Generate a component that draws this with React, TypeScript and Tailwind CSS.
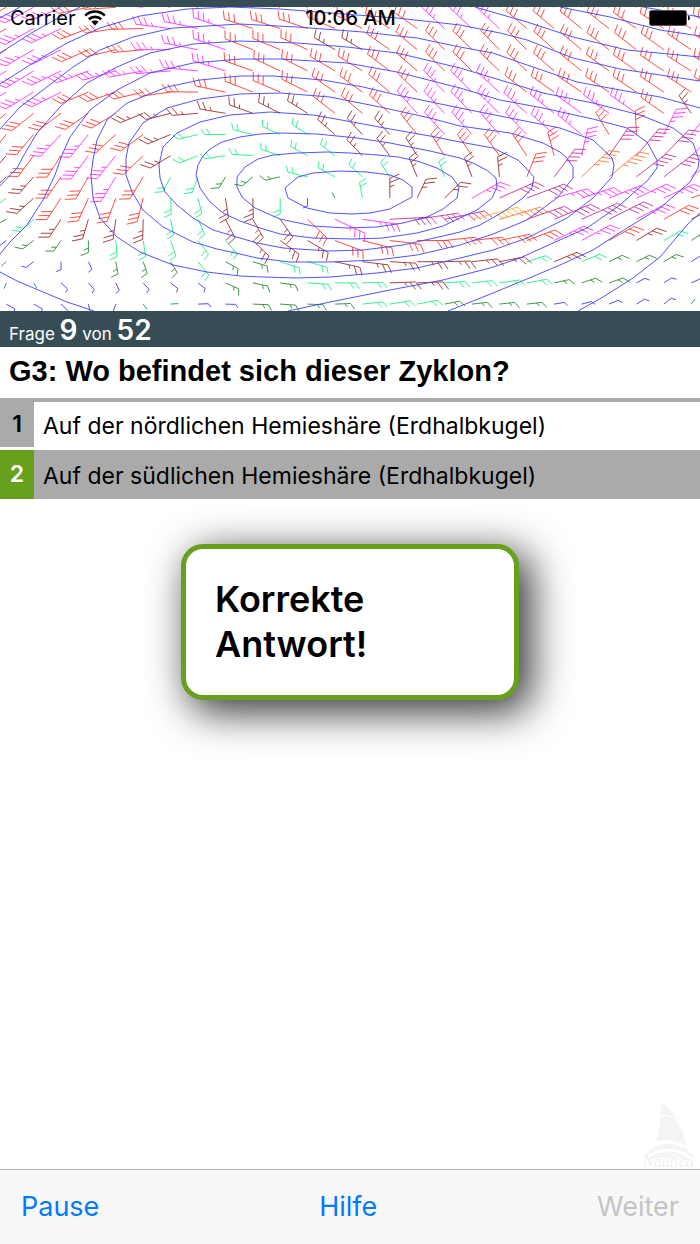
import React from 'react'

const barbColors: Record<string, string> = {
  t: '#1a8f8f',
  b: '#3c3cff',
  d: '#2e8b2e',
  g: '#22ee88',
  n: '#9c3030',
  r: '#ff3b30',
  m: '#ff33ff',
  p: '#c8329b',
  o: '#ff7733',
  y: '#ffb52e',
}

// shaft length, full feathers, half feathers
const barbShapes: Record<string, [number, number, number]> = {
  t: [6, 0, 0],
  b: [8, 0, 1],
  d: [12, 1, 1],
  g: [16, 2, 0],
  n: [20, 2, 1],
  r: [24, 3, 0],
  m: [27, 3, 1],
  p: [32, 4, 0],
  o: [34, 4, 1],
  y: [37, 5, 0],
}

// one entry per grid point: speed class and direction in degrees
const windRows = [
  'r215 m215 m210 r195 r185 m172 m165 m158 r155 r155 r155 r152 r150 r145 r142 r138 m130 m130 m130 r132 r133 r134 r135 r138 r140 r142 r145',
  'r218 m216 m212 r206 r191 r182 m171 m165 m156 r157 r158 r157 r152 r147 r142 r138 m130 m130 m130 r132 r133 r134 r135 r138 r140 r142 r145',
  'm218 m217 m213 r210 r197 r187 m180 m166 m156 r153 r152 r150 n143 n143 r138 r133 r128 r128 r127 r128 r131 r133 r135 r135 r137 r139 r141',
  'm219 m218 m212 m206 m200 m193 m186 m173 m158 r155 r149 r147 r143 r142 r136 r132 r128 r128 r129 r130 r132 r134 r137 r138 r139 r141 r143',
  'm219 m218 m213 r208 r203 r197 r190 r179 r165 r153 r151 r147 r138 r137 r133 r129 m127 m128 m131 r135 r138 r139 r139 r139 r139 r140 r141',
  'r228 r226 r224 r222 r218 n208 n198 n186 n168 n155 n147 n141 r135 r133 r131 m125 m126 m127 m129 m131 m134 m137 m137 m138 r138 n118 m75',
  'r238 r237 m234 m238 r230 r223 n208 g197 g180 g162 g150 g140 n132 n126 n126 r122 m125 m125 m124 m127 m131 m133 r115 r92 m69 m58 m50',
  'n236 r240 r243 m240 m238 r231 n218 g207 g191 g175 g157 g145 g135 n127 n120 n116 r116 r118 r119 r117 r102 m80 p62 p57 p53 m50 m48',
  'n230 n236 r242 r246 m245 r245 g248 g254 d246 d228 d196 g163 g145 g131 g117 n108 g106 n107 n94 r73 p60 o51 o47 p45 p45 m45 m45',
  'g225 n230 r243 r251 r254 r259 g272 g281 n277 n271 g270 b270 t112 g98 n90 n70 n52 m36 p30 p26 m20 m23 m27 m31 m31 r25 r25',
  'd215 g230 n243 n257 n264 n269 g279 g289 n292 n294 n299 r309 m329 m350 p4 p11 p15 y19 o21 p24 p28 p30 p33 m34 r36 n33 n33',
  'b225 d225 d242 d270 g274 g277 g285 g301 g305 n309 n317 n323 r334 r342 r351 r0 r8 r8 r15 r26 m32 m35 r36 n38 g37 d40 d40',
  't230 b225 b270 b290 d278 d285 d295 g302 d325 d338 g338 g340 n344 n351 n356 n0 n2 n8 n14 g22 n28 g28 d32 d33 d37 b40 b40',
  't255 t295 b310 b305 b290 b305 b315 b315 d330 d345 d350 g355 g0 g2 n3 n3 g5 g8 g10 g13 d16 d23 d24 b35 b40 b30 b30',
  'b325 b325 b310 b280 b255 t300 t5 b3 b358 d357 d355 d357 d3 g8 g12 g14 d14 d8 d8 d8 b12 b18 b28 b38 b45 t60 t60',
]

const isobars = [
  '285,188 298,177 313,173 340,171 367,172 390,175 403,180 412,187 412,197 390,209 370,213 352,214 330,213 307,208 288,198 285,188',
  '237,187 237,177 245,167 258,159 273,155 297,153 327,152 350,153 377,155 398,157 417,161 437,168 452,177 459,187 457,198 443,209 427,217 403,223 377,227 347,228 313,226 280,219 255,208 242,197 237,187',
  '196,175 198,165 203,156 210,149 222,142 240,137 260,134 280,133 317,134 357,138 390,143 430,151 460,158 475,164 488,171 496,178 497,187 492,198 477,210 460,218 443,226 417,233 383,238 353,239 313,238 280,234 257,227 240,221 223,213 210,202 200,188 196,175',
  '159,165 160,178 165,192 177,205 193,218 213,230 240,238 257,243 283,248 330,251 363,250 403,245 443,236 460,232 480,225 503,212 523,198 532,188 534,177 525,167 518,160 493,148 460,142 430,136 390,129 347,121 313,115 270,112 230,115 200,122 177,133 163,147 159,165',
  '126,158 126,175 132,192 143,210 163,227 193,242 217,249 240,254 257,258 290,262 330,262 377,260 417,255 460,245 493,234 527,220 557,198 573,178 573,167 567,158 560,152 543,143 510,133 460,126 430,118 380,107 330,97 280,93 240,94 200,99 167,108 143,123 129,143 126,158',
  '93,160 91,175 93,198 100,218 117,237 140,252 173,265 207,272 240,276 263,277 297,278 330,277 377,273 417,268 460,258 493,250 527,238 567,218 593,198 612,177 614,165 612,158 593,140 560,128 510,118 460,108 397,95 363,87 323,80 273,76 240,76 200,80 167,87 127,103 107,120 97,140 93,160',
  '0,254 10,242 27,225 43,200 55,175 62,155 70,137 90,110 117,90 150,73 193,63 240,59 280,59 347,63 397,72 460,88 500,100 543,108 593,119 627,128 647,142 657,160 657,168 648,180 620,205 587,228 553,243 520,258 490,268 443,280 390,290 330,302 288,311',
  '0,186 17,168 24,155 37,133 60,107 87,83 117,67 150,53 193,44 240,41 297,43 347,47 397,53 460,68 500,80 543,93 593,103 640,115 673,128 693,143 699,160 698,168 690,182 660,208 627,228 593,250 560,265 527,279 493,293 448,311',
  '0,129 20,107 43,90 73,67 100,50 133,37 173,28 240,24 297,27 363,32 417,38 460,47 493,53 527,65 577,82 620,90 660,97 700,108',
  '0,84 33,63 67,43 100,28 140,16 187,9 230,7 280,9 330,13 397,18 460,25 500,33 527,40 573,58 620,69 700,81',
  '0,53 33,32 60,17 80,7',
  '0,18 20,7',
  '475,7 527,22 573,37 627,50 700,57',
  '560,7 610,17 660,30 700,36',
  '643,7 700,17',
  '0,272 17,281 43,292 67,302 94,311',
  '578,311 603,297 633,278 660,257 687,225 700,213',
]

// the chart is wider than it is tall, so x is stretched
const STRETCH = 1.29

function barbPath(x: number, y: number, deg: number, kind: string) {
  const [length, full, half] = barbShapes[kind]
  const a = (deg * Math.PI) / 180
  const f = ((deg - 62) * Math.PI) / 180
  const at = (d: number) => [x + Math.cos(a) * d * STRETCH, y - Math.sin(a) * d]
  const [tx, ty] = at(length)
  let path = `M${x} ${y}L${tx.toFixed(1)} ${ty.toFixed(1)}`
  for (let i = 0; i < full + half; i++) {
    const size = i < full ? (length > 16 ? 8.5 : 6.5) : 4
    const [fx, fy] = at(length - i * 4.4)
    path += `M${fx.toFixed(1)} ${fy.toFixed(1)}l${(Math.cos(f) * size * STRETCH).toFixed(1)} ${(-Math.sin(f) * size).toFixed(1)}`
  }
  return path
}

function WeatherMap() {
  return (
    <svg viewBox="0 7 700 304" className="block w-full bg-white" role="img">
      <g fill="none" strokeWidth="0.9">
        {windRows.map((row, j) =>
          row.split(' ').map((cell, i) => (
            <path
              key={`${j}-${i}`}
              d={barbPath(6.2 + i * 27.4, 7.3 + j * 21.2, Number(cell.slice(1)), cell[0])}
              stroke={barbColors[cell[0]]}
            />
          ))
        )}
      </g>
      <g fill="none" stroke="#4040ff" strokeWidth="0.9" strokeLinejoin="round">
        {isobars.map((points) => (
          <polyline key={points} points={points} />
        ))}
      </g>
    </svg>
  )
}

function StatusBar() {
  return (
    <div className="absolute inset-x-0 top-0 z-10 grid h-9 grid-cols-3 items-center pr-[9px] pl-[10px] text-[20px] text-black">
      <div className="flex items-center gap-2">
        <span>Carrier</span>
        <svg viewBox="0 0 22 16" className="h-4 w-[22px]">
          <g fill="none" stroke="#000" strokeWidth="2.6">
            <path d="M1.2 5.6C6.8 0.2 15.2 0.2 20.8 5.6" />
            <path d="M4.8 9.3C8.4 6 13.6 6 17.2 9.3" />
          </g>
          <path d="M11 15.4L7.4 11.8C9.4 9.9 12.6 9.9 14.6 11.8Z" />
        </svg>
      </div>
      <span className="text-center font-medium">10:06 AM</span>
      <svg viewBox="0 0 42 16" className="h-4 w-[42px] justify-self-end">
        <rect x="0.5" y="0.5" width="37" height="15" rx="2" fill="#000" stroke="#555" />
        <path d="M39 5.5C41.6 6 41.6 10 39 10.5Z" />
      </svg>
    </div>
  )
}

function Answer({ number, text, selected }: { number: number; text: string; selected?: boolean }) {
  return (
    <button type="button" className={`flex w-full items-stretch text-left ${selected ? 'h-[49px] bg-[#aaaaaa]' : 'h-[45px] bg-white'}`}>
      <span className={`flex w-[34px] items-center justify-center text-[23px] font-semibold ${selected ? 'bg-[#66a01c] text-white' : 'bg-[#aaaaaa] text-black'}`}>
        {number}
      </span>
      <span className="flex items-center pt-[3px] pl-[9px] text-[23px] text-black">{text}</span>
    </button>
  )
}

function BoatMark() {
  return (
    <svg viewBox="0 0 58 68" className="absolute right-0 bottom-0 h-[68px] w-[58px] overflow-visible" aria-hidden="true">
      <g fill="#f4f4f4">
        <path d="M18 1C26 6 32 11 35 19C29 14 24 13 18 14C19 9 19 5 18 1Z" />
        <path d="M18 16C25 14 32 17 36 22C41 30 43 38 45 46C35 39 25 38 14 40C17 32 18 24 18 16Z" />
        <path d="M0 59C6 47 20 40 34 44C44 46 51 52 54 59C44 51 34 47 24 48C14 49 6 53 0 59Z" />
        <path d="M5 59C14 49 28 49 38 59C28 56 15 56 5 59Z" />
        <path d="M22 51C32 49 42 53 48 59L41 59C35 54 29 51 22 51Z" />
      </g>
      <text x="1" y="66" fontSize="16" fontStyle="italic" fill="#f0f0f0" fontFamily="Liberation Serif, serif">
        Nautica
      </text>
    </svg>
  )
}

export default function App() {
  return (
    <div className="relative flex min-h-screen flex-col bg-white font-[Inter,sans-serif]">
      <StatusBar />
      <header className="border-t-[7px] border-[#374d55]">
        <WeatherMap />
        <p className="h-9 bg-[#374d55] pl-[9px] text-[17px] leading-[38px] text-white">
          Frage <span className="text-[28px] font-semibold">9</span> von <span className="text-[28px] font-semibold">52</span>
        </p>
      </header>
      <main className="relative flex-1">
        <h1 className="h-[51px] pl-[9px] font-['Liberation_Sans',Arial,sans-serif] text-[29px] leading-[49px] font-bold text-black">
          G3: Wo befindet sich dieser Zyklon?
        </h1>
        <div className="flex flex-col gap-[3px] border-t-4 border-[#aaaaaa]">
          <Answer number={1} text="Auf der nördlichen Hemieshäre (Erdhalbkugel)" />
          <Answer number={2} text="Auf der südlichen Hemieshäre (Erdhalbkugel)" selected />
        </div>
        <div
          role="alert"
          className="mx-auto mt-[45px] w-[338px] rounded-[22px] border-[5px] border-[#66a01c] bg-white px-[29px] py-7 text-[36px] leading-[45px] font-semibold text-black shadow-[10px_10px_40px_2px_rgba(0,0,0,0.8)]"
        >
          Korrekte Antwort!
        </div>
        <BoatMark />
      </main>
      <footer className="flex h-[75px] items-center justify-between border-t border-[#b8b8b8] bg-[#f8f8f8] px-[21px] text-[27px] text-[#007aff]">
        <button type="button">Pause</button>
        <button type="button">Hilfe</button>
        <button type="button" disabled className="text-[#c4c4c4]">
          Weiter
        </button>
      </footer>
    </div>
  )
}
